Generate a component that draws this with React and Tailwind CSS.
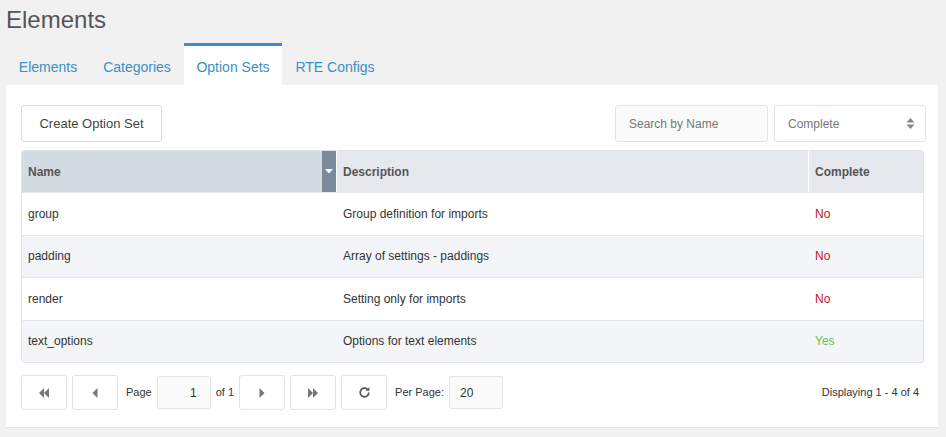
import React from "react";

const rows = [
  { name: "group", desc: "Group definition for imports", ok: false },
  { name: "padding", desc: "Array of settings - paddings", ok: false },
  { name: "render", desc: "Setting only for imports", ok: false },
  { name: "text_options", desc: "Options for text elements", ok: true },
];

function Btn({ children, className = "" }) {
  return (
    <div className={"flex h-[35px] w-[46px] items-center justify-center rounded-[3px] border border-[#e3e3e3] bg-white text-[#777] " + className}>
      {children}
    </div>
  );
}

export default function App() {
  return (
    <div className="min-h-[437px] w-[946px] bg-[#f1f1f1] text-[#333]" style={{ fontFamily: '"Liberation Sans", Arial, sans-serif' }}>
      <div className="px-[6px]">
        <div className="h-[43px] pt-[4px] text-[24px] leading-[32px] text-[#555]">Elements</div>
        <div className="flex h-[42px] items-stretch text-[14px] text-[#3b8fc8]">
          <div className="flex w-[84px] items-center justify-center pt-[6px]">Elements</div>
          <div className="flex w-[94px] items-center justify-center pt-[6px]">Categories</div>
          <div className="flex w-[98px] items-center justify-center border-t-[3px] border-[#3d8fcb] bg-white pt-[3px]">Option Sets</div>
          <div className="flex w-[106px] items-center justify-center pt-[6px]">RTE Configs</div>
        </div>
        <div className="h-[342px] w-[932px] bg-white px-[15px] pt-[20px] shadow-[0_1px_1px_rgba(0,0,0,0.05)]">
          <div className="flex h-[37px] w-[905px] items-center">
            <div className="flex h-[37px] w-[141px] items-center justify-center rounded-[3px] border border-[#ddd] text-[13px] text-[#444]">
              Create Option Set
            </div>
            <div className="flex-1" />
            <div className="flex h-[37px] w-[153px] items-center rounded-[3px] border border-[#e3e3e3] bg-[#fafafa] pl-[13px] text-[12px] text-[#777]">
              Search by Name
            </div>
            <div className="ml-[6px] flex h-[37px] w-[152px] items-center justify-between rounded-[3px] border border-[#e3e3e3] bg-white pl-[13px] pr-[10px] text-[12px] text-[#777]">
              <span>Complete</span>
              <svg width="9" height="13" viewBox="0 0 9 13">
                <path d="M4.5 1 L8.5 5.5 H0.5 Z" fill="#888" />
                <path d="M4.5 12 L8.5 7.5 H0.5 Z" fill="#888" />
              </svg>
            </div>
          </div>
          <div className="mt-[8px] w-[903px] overflow-hidden rounded-[3px] border border-[#dfe3e8] text-[12px]">
            <div className="flex h-[41px] bg-[#e5e9ed] font-bold text-[#555]">
              <div className="flex w-[300px] items-center bg-[#d4dbe3] pl-[6px]">Name</div>
              <div className="flex w-[14px] items-center justify-center bg-[#7a8a9d]">
                <svg width="8" height="5" viewBox="0 0 8 5"><path d="M0 0 H8 L4 4.5 Z" fill="#fff" /></svg>
              </div>
              <div className="flex w-[472px] items-center border-l border-white pl-[6px]">Description</div>
              <div className="flex flex-1 items-center border-l border-white pl-[6px]">Complete</div>
            </div>
            {rows.map((r, i) => (
              <div key={r.name} className={"flex h-[42.5px] items-center border-t border-[#e3e6ea] " + (i % 2 ? "bg-[#f3f5f8]" : "bg-white")}>
                <div className="w-[315px] pl-[6px]">{r.name}</div>
                <div className="w-[472px] pl-[6px]">{r.desc}</div>
                <div className={"pl-[6px] " + (r.ok ? "text-[#6bbd50]" : "text-[#c8161d]")}>{r.ok ? "Yes" : "No"}</div>
              </div>
            ))}
          </div>
          <div className="mt-[12px] flex h-[35px] items-center text-[11px] text-[#333]">
            <Btn>
              <svg width="12" height="10" viewBox="0 0 12 10"><path d="M6 0 V10 L1 5 Z M11 0 V10 L6 5 Z" fill="#777" /></svg>
            </Btn>
            <Btn className="ml-[5px]">
              <svg width="6" height="10" viewBox="0 0 6 10"><path d="M5.5 0 V10 L0.5 5 Z" fill="#777" /></svg>
            </Btn>
            <span className="ml-[8px]">Page</span>
            <div className="ml-[5px] flex h-[33px] w-[54px] items-center justify-end rounded-[3px] border border-[#e3e3e3] bg-[#fafafa] pr-[13px] text-[12px]">1</div>
            <span className="ml-[5px]">of 1</span>
            <Btn className="ml-[5px]">
              <svg width="6" height="10" viewBox="0 0 6 10"><path d="M0.5 0 V10 L5.5 5 Z" fill="#777" /></svg>
            </Btn>
            <Btn className="ml-[5px]">
              <svg width="12" height="10" viewBox="0 0 12 10"><path d="M1 0 V10 L6 5 Z M6 0 V10 L11 5 Z" fill="#777" /></svg>
            </Btn>
            <Btn className="ml-[5px] text-[#555]">
              <svg width="13" height="13" viewBox="0 0 24 24" fill="none" stroke="#555" strokeWidth="3.2" strokeLinecap="butt">
                <path d="M20 12a8 8 0 1 1-2.5-5.8" />
                <path d="M20.5 3 V8.5 H15 Z" fill="#555" stroke="#555" strokeWidth="1" />
              </svg>
            </Btn>
            <span className="ml-[8px]">Per Page:</span>
            <div className="ml-[5px] flex h-[33px] w-[54px] items-center rounded-[3px] border border-[#e3e3e3] bg-[#fafafa] pl-[10px] text-[12px]">20</div>
            <div className="flex-1" />
            <span className="mr-[4px]">Displaying 1 - 4 of 4</span>
          </div>
        </div>
      </div>
    </div>
  );
}
